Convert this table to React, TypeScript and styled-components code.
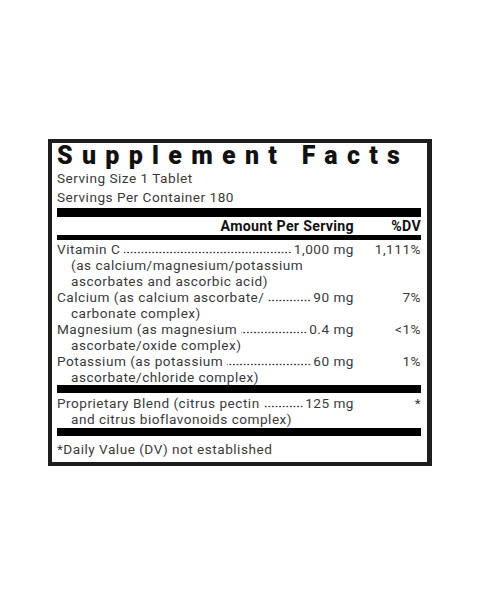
import React from "react";
import styled, { createGlobalStyle } from "styled-components";

const Global = createGlobalStyle`
  html, body { margin: 0; padding: 0; background: #ffffff; }
  body { font-family: Roboto, "Liberation Sans", Arial, sans-serif; }
`;

const Panel = styled.section`
  box-sizing: border-box;
  width: 384px;
  margin: 139px auto 0;
  border: 4px solid #1e1e1e;
  border-right-width: 5px;
  padding: 0 6px 0 5px;
  color: #3a3a3a;
  font-size: 13.6px;
  letter-spacing: 0.5px;
`;

const Title = styled.h1`
  margin: 0;
  height: 26px;
  font-size: 25px;
  line-height: 26px;
  font-weight: 900;
  letter-spacing: 9.3px;
  color: #111;
  white-space: nowrap;
`;

const InfoLine = styled.div`
  line-height: 19px;
`;

const Bar = styled.div<{ $h: number; $mt?: number }>`
  height: ${(p) => p.$h}px;
  margin-top: ${(p) => p.$mt ?? 0}px;
  background: #000;
`;

const Grid = styled.div`
  display: grid;
  grid-template-columns: 297px 1fr;
  line-height: 16px;
`;

const HeadCell = styled.div`
  text-align: right;
  font-size: 14.2px;
  font-weight: 700;
  color: #111;
  line-height: 18px;
  letter-spacing: 0.3px;
`;

const NameCell = styled.div`
  display: flex;
  align-items: stretch;
  min-width: 0;
  white-space: nowrap;
`;

const Leader = styled.span`
  flex: 1;
  min-width: 0;
  margin: 0 2px 0 4px;
  background-image: radial-gradient(circle, #3a3a3a 0.75px, transparent 1.15px);
  background-size: 3.6px 3px;
  background-repeat: repeat-x;
  background-position: right 0 bottom 3px;
`;

const DvCell = styled.div`
  text-align: right;
`;

const SubLine = styled.div`
  grid-column: 1 / -1;
  padding-left: 14px;
  white-space: nowrap;
`;

const Spacer = styled.div<{ $h: number }>`
  grid-column: 1 / -1;
  height: ${(p) => p.$h}px;
`;

const FullBar = styled.div<{ $h: number }>`
  grid-column: 1 / -1;
  height: ${(p) => p.$h}px;
  background: #000;
`;

const Footnote = styled.div`
  line-height: 25px;
  padding-top: 1px;
`;

type Row = { name: string; amount: string; dv: string; sub: string[] };

const rows: Row[] = [
  {
    name: "Vitamin C",
    amount: "1,000 mg",
    dv: "1,111%",
    sub: ["(as calcium/magnesium/potassium", "ascorbates and ascorbic acid)"],
  },
  {
    name: "Calcium (as calcium ascorbate/",
    amount: "90 mg",
    dv: "7%",
    sub: ["carbonate complex)"],
  },
  {
    name: "Magnesium (as magnesium",
    amount: "0.4 mg",
    dv: "<1%",
    sub: ["ascorbate/oxide complex)"],
  },
  {
    name: "Potassium (as potassium",
    amount: "60 mg",
    dv: "1%",
    sub: ["ascorbate/chloride complex)"],
  },
];

const blend: Row = {
  name: "Proprietary Blend (citrus pectin",
  amount: "125 mg",
  dv: "*",
  sub: ["and citrus bioflavonoids complex)"],
};

const Entry = ({ row }: { row: Row }) => (
  <>
    <NameCell>
      <span>{row.name}</span>
      <Leader aria-hidden="true" />
      <span>{row.amount}</span>
    </NameCell>
    <DvCell>{row.dv}</DvCell>
    {row.sub.map((s) => (
      <SubLine key={s}>{s}</SubLine>
    ))}
  </>
);

export default function App() {
  return (
    <>
      <Global />
      <Panel>
        <Title>Supplement Facts</Title>
        <InfoLine>Serving Size 1 Tablet</InfoLine>
        <InfoLine>Servings Per Container 180</InfoLine>
        <Bar $h={9} $mt={1} />
        <Grid>
          <HeadCell>Amount Per Serving</HeadCell>
          <HeadCell>%DV</HeadCell>
          <FullBar $h={5} />
          <Spacer $h={1} />
          {rows.map((r) => (
            <Entry key={r.name} row={r} />
          ))}
          <FullBar $h={8} />
          <Spacer $h={2} />
          <Entry row={blend} />
          <Spacer $h={1} />
          <FullBar $h={8} />
        </Grid>
        <Footnote>*Daily Value (DV) not established</Footnote>
      </Panel>
    </>
  );
}
